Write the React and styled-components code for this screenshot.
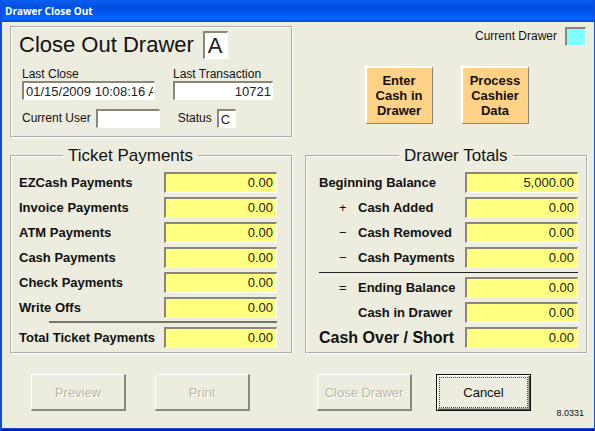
import { useState } from "react";
import styled, { createGlobalStyle } from "styled-components";

const TICKET_ROWS = [
  { id: "ezcash", label: "EZCash Payments", value: "0.00" },
  { id: "invoice", label: "Invoice Payments", value: "0.00" },
  { id: "atm", label: "ATM Payments", value: "0.00" },
  { id: "cash", label: "Cash Payments", value: "0.00" },
  { id: "check", label: "Check Payments", value: "0.00" },
  { id: "writeoffs", label: "Write Offs", value: "0.00" },
];

const BALANCE_ROWS = [
  { id: "added", sign: "+", label: "Cash Added", value: "0.00" },
  { id: "removed", sign: "−", label: "Cash Removed", value: "0.00" },
  { id: "payments", sign: "−", label: "Cash Payments", value: "0.00" },
];

const AmountRow = ({ id, sign, label, value, indent, large }) => (
  <Row>
    {indent && <Sign>{sign}</Sign>}
    <RowLabel htmlFor={id} $large={large}>
      {label}
    </RowLabel>
    <Amount id={id} defaultValue={value} readOnly />
  </Row>
);

const App = () => {
  const [user, setUser] = useState("");
  const [drawer, setDrawer] = useState("A");

  return (
    <Window>
      <GlobalStyle />
      <TitleBar>Drawer Close Out</TitleBar>
      <Content>
        <Columns>
          <Summary>
            <Heading>
              <HeadingLabel htmlFor="drawer">Close Out Drawer</HeadingLabel>
              <DrawerInput id="drawer" value={drawer} onChange={(e) => setDrawer(e.target.value)} />
            </Heading>
            <Pair>
              <Stack>
                <Label htmlFor="last-close">Last Close</Label>
                <TextInput id="last-close" $width={133} defaultValue="01/15/2009 10:08:16 AM" readOnly />
              </Stack>
              <Stack>
                <Label htmlFor="last-transaction">Last Transaction</Label>
                <TextInput id="last-transaction" $width={100} $right defaultValue="10721" readOnly />
              </Stack>
            </Pair>
            <Pair>
              <Inline>
                <Label htmlFor="user">Current User</Label>
                <TextInput id="user" $width={64} value={user} onChange={(e) => setUser(e.target.value)} />
              </Inline>
              <Inline>
                <Label htmlFor="status">Status</Label>
                <TextInput id="status" $width={19} defaultValue="C" readOnly />
              </Inline>
            </Pair>
          </Summary>
          <Actions>
            <CurrentDrawer>
              <Label htmlFor="current-drawer">Current Drawer</Label>
              <TextInput id="current-drawer" $width={21} $color="#80ffff" readOnly />
            </CurrentDrawer>
            <TileGroup>
              <Tile type="button">Enter Cash in Drawer</Tile>
              <Tile type="button">Process Cashier Data</Tile>
            </TileGroup>
          </Actions>
        </Columns>

        <Columns>
          <Panel $left={7} $right={14}>
            <Legend $left={44}>Ticket Payments</Legend>
            {TICKET_ROWS.map((row) => (
              <AmountRow key={row.id} {...row} />
            ))}
            <Rule $indent={30} $thick />
            <AmountRow id="ticket-total" label="Total Ticket Payments" value="0.00" />
          </Panel>
          <Panel $left={12} $right={8}>
            <Legend $left={80}>Drawer Totals</Legend>
            <AmountRow id="beginning" label="Beginning Balance" value="5,000.00" />
            {BALANCE_ROWS.map((row) => (
              <AmountRow key={row.id} indent {...row} />
            ))}
            <Rule $indent={0} />
            <AmountRow id="ending" indent sign="=" label="Ending Balance" value="0.00" />
            <AmountRow id="in-drawer" indent label="Cash in Drawer" value="0.00" />
            <AmountRow id="over-short" large label="Cash Over / Short" value="0.00" />
          </Panel>
        </Columns>

        <Columns>
          <ButtonRow $left={21} $gap={29}>
            <Button type="button" disabled>
              Preview
            </Button>
            <Button type="button" disabled>
              Print
            </Button>
          </ButtonRow>
          <ButtonRow $left={12} $gap={24}>
            <Button type="button" disabled>
              Close Drawer
            </Button>
            <CancelButton type="button">Cancel</CancelButton>
            <Version>8.0331</Version>
          </ButtonRow>
        </Columns>
      </Content>
    </Window>
  );
};

const GlobalStyle = createGlobalStyle`
  * {
    box-sizing: border-box;
  }
  body {
    margin: 0;
    font-family: "Liberation Sans", Arial, sans-serif;
    font-size: 13px;
    color: #111;
  }
  input,
  button {
    font-family: inherit;
    font-size: 13px;
    border-radius: 0;
    outline: none;
  }
`;

const Window = styled.main`
  display: flex;
  flex-direction: column;
  min-height: 100vh;
  border: solid #0a4fe0;
  border-width: 0 1px 2px 2px;
  border-bottom-color: #001a9c;
  background: #ecedde;
  box-shadow: inset 0 -1px #0a4fe0;
`;

const TitleBar = styled.header`
  height: 22px;
  padding-left: 3px;
  background: linear-gradient(#0a5ff0 0, #0050e0 30%, #0058ee 60%, #0468ff 85%, #0046d0 100%);
  font-family: "Open Sans", sans-serif;
  font-size: 10px;
  font-weight: 700;
  line-height: 23px;
  color: #fff;
`;

const Content = styled.div`
  display: flex;
  flex: 1;
  flex-direction: column;
  padding: 4px 6px 0 8px;
`;

const Columns = styled.div`
  display: grid;
  grid-template-columns: 1fr 1fr;
  gap: 12px;
`;

const Summary = styled.section`
  display: flex;
  flex-direction: column;
  gap: 9px;
  height: 112px;
  padding: 3px 10px 0;
  border: 2px groove #fff;
`;

const Heading = styled.div`
  display: flex;
  align-items: center;
  gap: 9px;
  margin-left: -3px;
`;

const HeadingLabel = styled.label`
  font-size: 22px;
`;

const Pair = styled.div`
  display: flex;
  gap: 18px;
`;

const Stack = styled.div`
  display: flex;
  flex-direction: column;
`;

const Inline = styled.div`
  display: flex;
  align-items: center;
  gap: 5px;
`;

const Label = styled.label`
  font-size: 12px;
  line-height: 13px;
`;

const Input = styled.input`
  border: 2px solid;
  border-width: 2px 1px 1px 2px;
  border-color: #8b857b #fff #fff #8b857b;
  background: #fff;
  color: #222;
`;

const DrawerInput = styled(Input)`
  width: 25px;
  height: 28px;
  padding: 0 3px;
  font-size: 22px;
`;

const TextInput = styled(Input)`
  width: ${(props) => props.$width}px;
  height: 19px;
  padding: 0 1px 0 2px;
  background: ${(props) => props.$color || "#fff"};
  text-align: ${(props) => (props.$right ? "right" : "left")};
`;

const Actions = styled.section`
  display: flex;
  flex-direction: column;
  gap: 20px;
`;

const CurrentDrawer = styled.div`
  display: flex;
  align-items: center;
  justify-content: flex-end;
  gap: 8px;
  padding: 1px 2px 0 0;
`;

const TileGroup = styled.div`
  display: flex;
  justify-content: center;
  gap: 28px;
`;

const Tile = styled.button`
  width: 68px;
  height: 58px;
  padding: 0 6px;
  border: 2px solid;
  border-width: 2px 1px 1px 2px;
  border-color: #fff #8b857b #8b857b #fff;
  background: #ffd285;
  font-weight: 700;
  line-height: 15px;
  color: #111;
`;

const Panel = styled.fieldset`
  display: flex;
  flex-direction: column;
  gap: 4px;
  min-width: 0;
  margin: 8px 0 0;
  padding: 6px ${(props) => props.$right}px 4px ${(props) => props.$left}px;
  border: 2px groove #fff;
`;

const Legend = styled.legend`
  margin-left: ${(props) => props.$left}px;
  padding: 0 5px;
  font-size: 17px;
  line-height: 20px;
`;

const Row = styled.div`
  display: flex;
  align-items: center;
`;

const Sign = styled.span`
  width: 39px;
  padding-left: 20px;
`;

const RowLabel = styled.label`
  flex: 1;
  font-size: ${(props) => (props.$large ? 16 : 13)}px;
  font-weight: 700;
  line-height: 16px;
  white-space: nowrap;
`;

const Amount = styled(Input)`
  width: 113px;
  height: 21px;
  padding: 0 3px 2px;
  background: #ffff80;
  text-align: right;
`;

const Rule = styled.hr`
  width: calc(100% - ${(props) => props.$indent}px);
  margin: ${(props) => (props.$thick ? -1 : 0)}px 0 0 auto;
  border: 0;
  border-top: ${(props) => (props.$thick ? "2px solid #77766a" : "1px solid #222")};
`;

const ButtonRow = styled.div`
  display: flex;
  gap: ${(props) => props.$gap}px;
  padding: 20px 4px 0 ${(props) => props.$left}px;
`;

const Button = styled.button`
  width: 95px;
  height: 37px;
  padding: 0;
  border: 1px solid;
  border-width: 1px 2px 2px 1px;
  border-color: #fff #8b897c #8b897c #fff;
  background: #ecedde;
  color: #111;

  &:disabled {
    color: #b9b8a9;
    text-shadow: 1px 1px #fff;
  }
`;

// default button: black frame with the dotted focus ring inside it
const CancelButton = styled(Button)`
  border: 1px solid #111;
  outline: 1px dotted #444;
  outline-offset: -4px;
  box-shadow: inset 1px 1px #fff, inset -1px -1px #55534a, inset -2px -2px #a9a799;
`;

const Version = styled.span`
  align-self: flex-end;
  margin: 0 0 -7px auto;
  font-family: "Liberation Sans Narrow", "Liberation Sans", sans-serif;
  font-size: 9px;
  line-height: 10px;
`;

export default App;
